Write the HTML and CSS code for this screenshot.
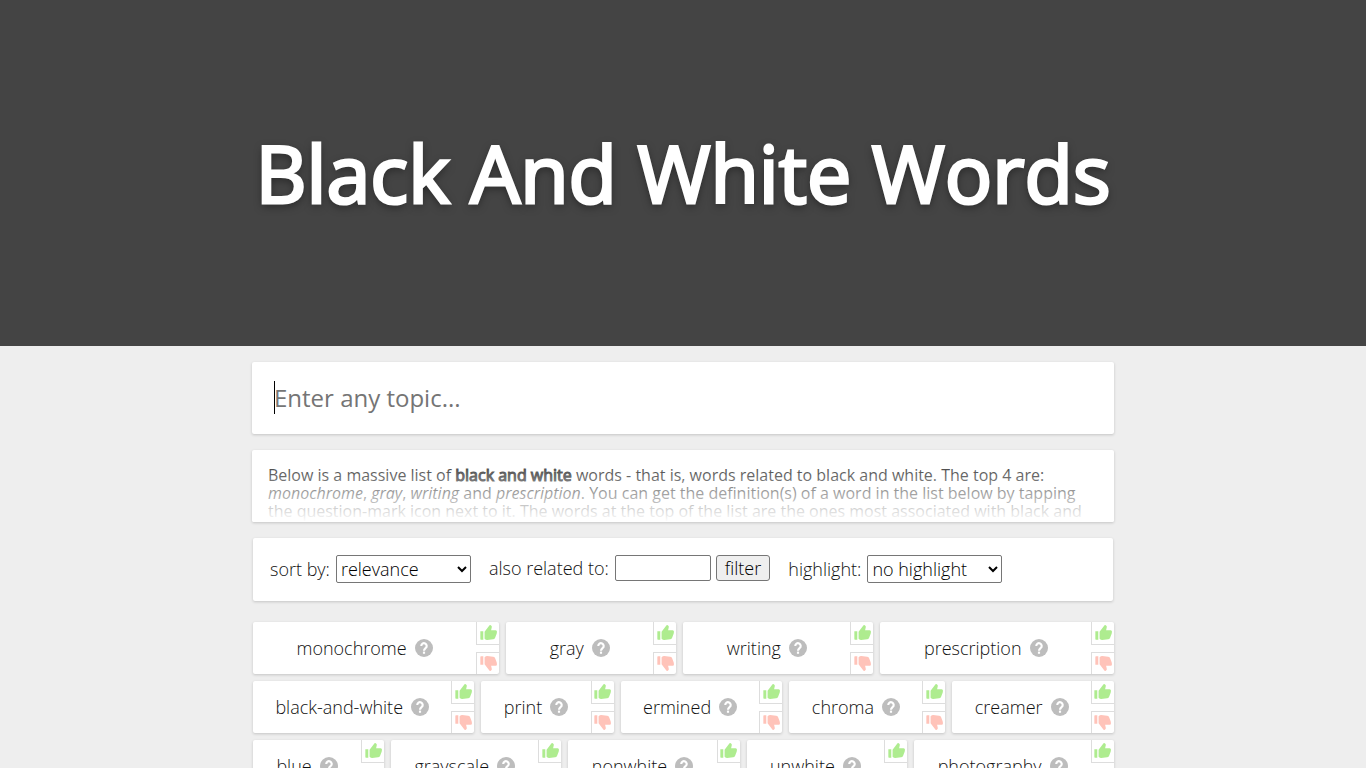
FILE: index.html
```html
<!DOCTYPE html>
<html lang="en">
<head>
    <meta charset="UTF-8">
    <meta name="viewport" content="width=device-width, initial-scale=1">
    <title>Black And White Words</title>
    <link rel="stylesheet" href="styles.css">
</head>
<body>
    <svg class="sprite" aria-hidden="true">
        <symbol id="icon-help" viewBox="0 0 20 20">
            <circle cx="10" cy="10" r="10" fill="#bdbdbd"/>
            <path d="M7 7.8a3 3 0 1 1 4.9 2.2C10.7 11 10 11.500 10 13" fill="none" stroke="#fff" stroke-width="2.400"/>
            <rect x="8.800" y="14" width="2.400" height="2.400" fill="#fff"/>
        </symbol>
        <symbol id="icon-thumb" viewBox="0 0 52 46">
            <path d="M1 19h9v26H3q-2 0-2-2zM14 21 28 2q2-3 5-1 4 2 3 6l-2 9h14q4 0 4 5l-1 6-5 13q-2 4-6 4l-18 2q-4 0-8-4z" fill="currentColor"/>
        </symbol>
    </svg>

    <header class="hero">
        <h1>Black And White Words</h1>
    </header>

    <main class="content">
        <input type="text" class="card topic" id="topic" placeholder="Enter any topic..." aria-label="Enter any topic" autofocus>

        <div class="card about">
            <p>Below is a massive list of <b>black and white</b> words - that is, words related to black and white. The top 4 are: <i>monochrome</i>, <i>gray</i>, <i>writing</i> and <i>prescription</i>. You can get the definition(s) of a word in the list below by tapping the question-mark icon next to it. The words at the top of the list are the ones most associated with black and white.</p>
        </div>

        <div class="card filters">
            <div class="filter">
                <label for="sort">sort by:</label>
                <select id="sort">
                    <option>relevance</option>
                    <option>a-z</option>
                </select>
            </div>
            <div class="filter">
                <label for="related">also related to:</label>
                <input type="text" id="related">
                <button type="button" class="btn-filter">filter</button>
            </div>
            <div class="filter">
                <label for="highlight">highlight:</label>
                <select id="highlight">
                    <option>no highlight</option>
                    <option>nouns</option>
                </select>
            </div>
        </div>

        <div class="words" id="words"></div>
    </main>

    <script>
        const words = [
            'monochrome', 'gray', 'writing', 'prescription',
            'black-and-white', 'print', 'ermined', 'chroma', 'creamer',
            'blue', 'grayscale', 'nonwhite', 'unwhite', 'photography'
        ];

        document.getElementById('words').innerHTML = words.map(word => `
            <div class="word">
                <div class="word-body">
                    <span>${word}</span>
                    <button type="button" class="help" aria-label="define ${word}"><svg><use href="#icon-help"/></svg></button>
                </div>
                <div class="votes">
                    <button type="button" class="vote up" aria-label="upvote ${word}"><svg><use href="#icon-thumb"/></svg></button>
                    <button type="button" class="vote down" aria-label="downvote ${word}"><svg><use href="#icon-thumb"/></svg></button>
                </div>
            </div>
        `).join('');
    </script>
</body>
</html>
```

FILE: styles.css
```css
* {
    box-sizing: border-box;
}

body {
    margin: 0;
    background: #eee;
    color: #111;
    font-family: "Open Sans", sans-serif;
    font-size: 18px;
    font-weight: 300;
    overflow: hidden;
    height: 100vh;
}

.sprite {
    display: none;
}

.hero {
    display: flex;
    align-items: center;
    justify-content: center;
    height: 45vh;
    background: #444;
}

.hero h1 {
    margin: 0;
    color: #fff;
    font-size: 79px;
    font-weight: 400;
    line-height: 112px;
    text-align: center;
    text-shadow: 0 3px 8px rgba(0,0,0,0.5);
    -webkit-text-stroke: 3px #fff;
}

.content {
    max-width: 862px;
    margin: 0 auto;
    padding-top: 16px;
}

.card {
    background: #fff;
    border-radius: 2px;
    box-shadow: 0 1px 3px rgba(0,0,0,0.18);
}

.topic {
    display: block;
    width: 100%;
    height: 72px;
    padding: 0 22px;
    border: none;
    outline: none;
    /* caret line at the start of the field */
    background: linear-gradient(#000, #000) 22px 19px / 1px 33px no-repeat #fff;
    font-family: inherit;
    font-size: 24px;
    font-weight: 400;
    caret-color: transparent;
}

.topic::placeholder {
    color: #757575;
}

.about {
    position: relative;
    height: 72px;
    margin-top: 16px;
    padding: 16px;
    overflow: hidden;
    font-size: 16px;
    font-weight: 400;
    line-height: 18px;
}

.about::after {
    content: "";
    position: absolute;
    inset: 0;
    background: linear-gradient(rgba(255,255,255,0), #fff);
}

.about p {
    margin: 0;
}

.about b {
    font-weight: 400;
    -webkit-text-stroke: 1px;
}

.filters {
    display: flex;
    flex-wrap: wrap;
    align-items: flex-start;
    gap: 18px;
    margin: 16px 1px 0;
    padding: 17px 17px 18px;
}

.filter {
    display: flex;
    align-items: center;
    gap: 5px;
}

.filter label {
    margin-right: 1px;
}

.filter select,
.filter input,
.btn-filter {
    font-family: inherit;
    font-size: 18px;
    font-weight: inherit;
    color: #000;
}

.filter select {
    width: 135px;
    height: 28px;
    background: #fff;
    border: 1px solid #767676;
    border-radius: 2px;
}

.filter input {
    width: 96px;
    height: 26px;
    border: 1px solid #767676;
    border-radius: 2px;
}

.btn-filter {
    height: 26px;
    padding: 0 8px;
    background: #efefef;
    border: 1px solid #767676;
    border-radius: 3px;
    line-height: 24px;
}

.words {
    display: flex;
    flex-wrap: wrap;
    gap: 7px;
    margin: 21px 0 0 1px;
}

.word {
    display: flex;
    flex: 1 0 auto;
    height: 52px;
    background: #fff;
    border-radius: 2px;
    box-shadow: 0 1px 3px rgba(0,0,0,0.18);
}

.word-body {
    display: flex;
    flex: 1;
    align-items: center;
    justify-content: center;
    gap: 8px;
    padding: 0 18px;
}

.help {
    width: 18px;
    height: 18px;
    padding: 0;
    background: none;
    border: none;
    cursor: pointer;
}

.help svg {
    display: block;
    width: 18px;
    height: 18px;
}

.votes {
    display: flex;
    flex-direction: column;
    justify-content: space-between;
}

.vote {
    display: flex;
    align-items: center;
    justify-content: center;
    width: 23px;
    height: 22px;
    padding: 0;
    background: none;
    border: 0 solid #ddd;
    border-left-width: 1px;
    cursor: pointer;
}

.vote svg {
    width: 17px;
    height: 15px;
}

.up {
    height: 23px;
    border-bottom-width: 1px;
    color: #aeec8f;
}

.down {
    border-top-width: 1px;
    color: #ffc3b9;
}

.down svg {
    transform: scaleY(-1);
}
```
